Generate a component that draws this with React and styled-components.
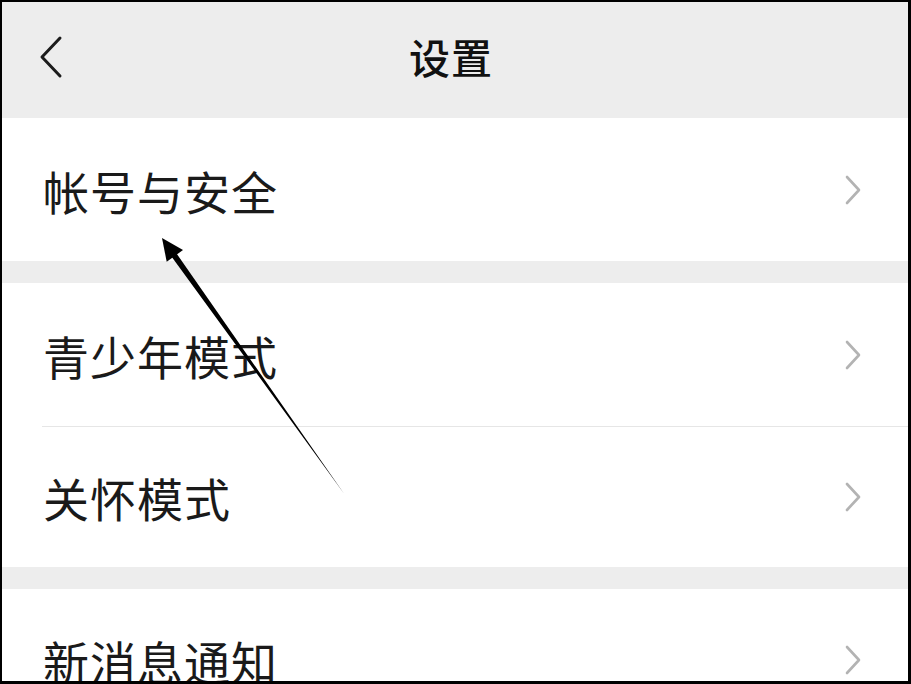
import React from "react";
import styled, { createGlobalStyle } from "styled-components";

const Global = createGlobalStyle`
  html, body { margin: 0; padding: 0; background: #fff; }
  body { font-family: "Noto Sans CJK SC", "Noto Sans", sans-serif; }
  * { box-sizing: border-box; }
`;

const Frame = styled.div`
  position: relative;
  width: 911px;
  height: 684px;
  border-style: solid;
  border-color: #000;
  border-width: 2px 3px 3px 2px;
  overflow: hidden;
  background: #fff;
  display: flex;
  flex-direction: column;
`;

const Header = styled.header`
  flex: 0 0 116px;
  background: #ededed;
  display: grid;
  grid-template-columns: 100px 1fr 100px;
  align-items: center;
  padding-bottom: 7px;
`;

const BackButton = styled.div`
  display: flex;
  align-items: center;
  padding-left: 36px;
`;

const Title = styled.h1`
  margin: 0;
  text-align: center;
  font-size: 41px;
  font-weight: 500;
  color: #111;
  letter-spacing: 1px;
  line-height: 1;
  padding-right: 8px;
`;

const Gap = styled.div`
  flex: 0 0 22px;
  background: #ededed;
`;

const Row = styled.div`
  flex: 0 0 ${(p) => p.$h}px;
  display: flex;
  align-items: center;
  justify-content: space-between;
  padding: 0 46px 0 41px;
  background: #fff;
`;

const Label = styled.span`
  font-size: 46px;
  color: #1a1a1a;
  line-height: 1;
  letter-spacing: 1px;
`;

const Divider = styled.div`
  flex: 0 0 1px;
  margin-left: 40px;
  background: #e6e6e6;
`;

const Annotation = styled.svg`
  position: absolute;
  left: -2px;
  top: -2px;
  pointer-events: none;
`;

const Chevron = () => (
  <svg width="18" height="32" viewBox="0 0 18 32">
    <path d="M3 3 L15 16 L3 29" fill="none" stroke="#b3b3b3" strokeWidth="2.6" strokeLinecap="round" strokeLinejoin="round" />
  </svg>
);

const Back = () => (
  <svg width="26" height="44" viewBox="0 0 26 44">
    <path d="M22 3 L4 22 L22 41" fill="none" stroke="#1c1c1c" strokeWidth="3" strokeLinecap="round" strokeLinejoin="round" />
  </svg>
);

const Item = ({ label, h }) => (
  <Row $h={h}>
    <Label>{label}</Label>
    <Chevron />
  </Row>
);

export default function App() {
  return (
    <>
      <Global />
      <Frame>
        <Header>
          <BackButton>
            <Back />
          </BackButton>
          <Title>设置</Title>
          <span />
        </Header>
        <Item label="帐号与安全" h={143} />
        <Gap />
        <Item label="青少年模式" h={143} />
        <Divider />
        <Item label="关怀模式" h={140} />
        <Gap />
        <Item label="新消息通知" h={142} />
        <Annotation width="911" height="684" viewBox="0 0 911 684">
          <polygon points="174.8,251 170,254.4 345.2,495.2 344.8,494.8" fill="#000" />
          <polygon points="162,238 183,250.1 166.7,261.7" fill="#000" />
        </Annotation>
      </Frame>
    </>
  );
}
